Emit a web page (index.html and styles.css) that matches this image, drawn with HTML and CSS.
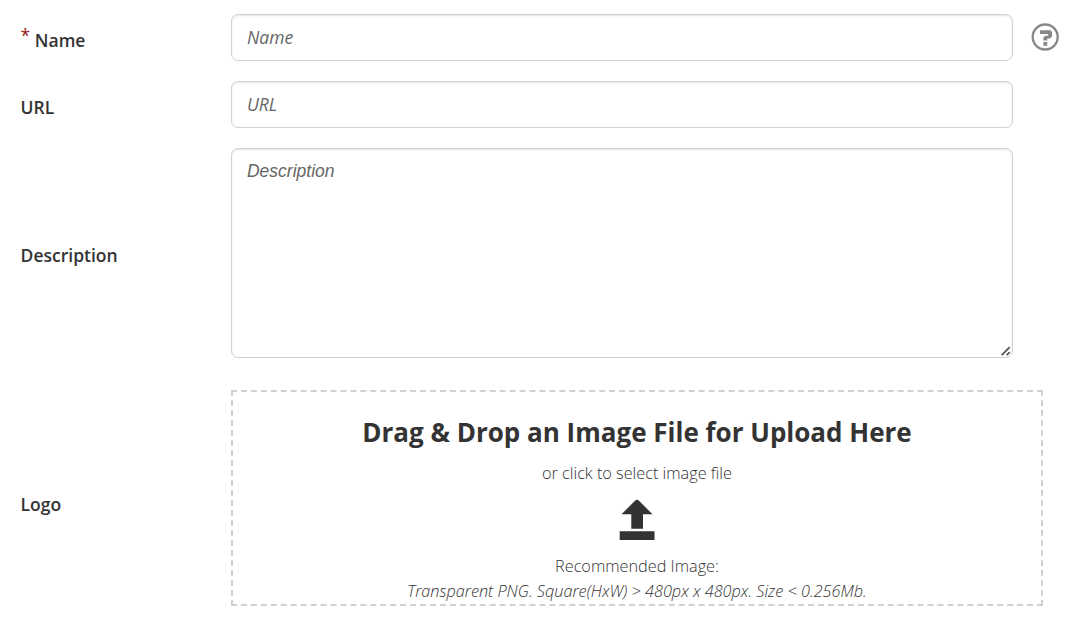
FILE: index.html
```html
<!DOCTYPE html>
<html lang="en">
<head>
<meta charset="utf-8">
<title>Details</title>
<link rel="stylesheet" href="styles.css">
</head>
<body>
<form class="form">
  <div class="row">
    <label class="label" for="name"><span class="required">*</span> Name</label>
    <input class="field" id="name" placeholder="Name">
    <svg class="help" viewBox="0 0 28 28"><circle cx="14.2" cy="14" r="12.5" fill="none" stroke="#888" stroke-width="2.3"/><path d="M9 7.3H19.3L21 9V13.6L18.8 15.6H16.2V17.6H12.4V14.6L14.4 12.8H17.2V11H9zM12.4 19.1H16.2V22.7H12.4z" fill="#888"/></svg>
  </div>
  <div class="row">
    <label class="label" for="url">URL</label>
    <input class="field" id="url" placeholder="URL">
  </div>
  <div class="row row-description">
    <label class="label" for="description">Description</label>
    <div class="area-wrap">
      <textarea class="field area" id="description" placeholder="Description"></textarea>
      <svg class="grip" viewBox="0 0 10 10"><path d="M.7 9.2L8.7 1.2M5.7 9.2L8.7 6.2" stroke="#555" stroke-width="1.8"/></svg>
    </div>
  </div>
  <div class="row row-logo">
    <span class="label">Logo</span>
    <div class="drop">
      <h2 class="title">Drag &amp; Drop an Image File for Upload Here</h2>
      <p class="hint">or click to select image file</p>
      <svg class="upload" viewBox="0 0 36 42"><path d="M16.5 1.3Q18 .3 19.5 1.3L33.5 15.3H24V29.7H12.3V15.3H2.5zM.7 32.3H35.5V41H.7z" fill="#333"/></svg>
      <p class="note">Recommended Image:</p>
      <p class="note spec">Transparent PNG. Square(HxW) &gt; 480px x 480px. Size &lt; 0.256Mb.</p>
    </div>
  </div>
</form>
</body>
</html>
```
FILE: styles.css
```css
* { box-sizing: border-box; }
body { margin: 0; background: #fff; color: #333; font-family: "Open Sans", sans-serif; font-size: 17.5px; }
.form { padding: 14px 0 0 20.6px; }
.row { display: flex; align-items: center; margin-bottom: 20px; }
.label { width: 210.4px; flex: none; font-weight: 600; line-height: 24px; padding-top: 5px; }
.required { position: relative; top: -5px; color: #962020; font-weight: 400; }
.field { width: 782px; height: 47px; flex: none; padding: 0 15px 1px; border: 1px solid #d0d0d8; border-radius: 7px; box-shadow: inset 0 1px 2px rgba(0,0,0,.1); font: 17.5px/24px "Open Sans", sans-serif; outline: 0; }
.field::placeholder { color: #666; font-style: italic; opacity: 1; }
.area-wrap { position: relative; }
.area { display: block; height: 210px; padding: 10px 15px; resize: none; font-family: "Liberation Sans", sans-serif; }
.grip { position: absolute; right: 2px; bottom: 2px; width: 10px; height: 10px; }
.help { width: 28px; height: 28px; margin: -2px 0 0 18px; }
.row-description { margin-bottom: 32px; }
.row-description .label { padding-top: 3px; }
.row-logo .label { padding-top: 12px; }
.drop { width: 812px; height: 216px; border: 2px dashed #d0d0d8; text-align: center; display: flex; flex-direction: column; align-items: center; }
.title { margin: 22px 0 0; font-size: 26px; line-height: 36px; font-weight: 700; }
.hint { margin: 11px 0 0; font-size: 16.25px; line-height: 24px; font-weight: 300; }
.upload { width: 36px; height: 42px; margin-top: 14px; }
.note { margin: 13px 0 0; font-size: 16.25px; line-height: 25px; font-weight: 300; }
.spec { margin: 0; font-style: italic; }
```
